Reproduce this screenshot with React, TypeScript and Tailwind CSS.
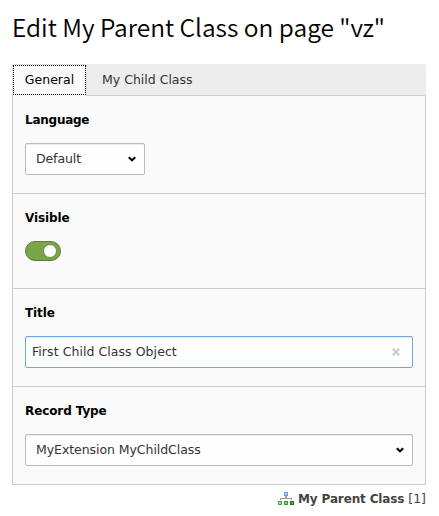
import type { ReactNode } from 'react';

function Chevron() {
  return (
    <svg width="8" height="6" viewBox="0 0 8 6" className="shrink-0" fill="none">
      <path d="M0.8 1.2L4 4.2L7.2 1.2" stroke="#000" strokeWidth="2.1" />
    </svg>
  );
}

function Select({ value, className }: { value: ReactNode; className: string }) {
  return (
    <div className={`flex h-8 items-center justify-between rounded-[2px] border border-[#bbb] bg-[#fefefe] pl-2.5 pr-2 text-[#333] shadow-[inset_0_1px_1px_rgba(0,0,0,0.075)] ${className}`}>
      {value}
      <Chevron />
    </div>
  );
}

function Field({ label, children, className = '' }: { label: ReactNode; children: ReactNode; className?: string }) {
  return (
    <div className={`border-b border-[#ccc] px-3 ${className}`}>
      <div className="flex h-[47px] items-center text-[12px] font-bold text-black">{label}</div>
      {children}
    </div>
  );
}

function TreeIcon() {
  return (
    <svg width="16" height="16" viewBox="0 0 16 16" className="mr-1 shrink-0" shapeRendering="crispEdges">
      <rect x="6" y="1" width="4" height="4" fill="#6f9fe0" />
      <rect x="7" y="2" width="2" height="2" fill="#a9caf5" />
      <path d="M7 5h2v2h5v2h-1v-1h-10v1h-1v-2h5z" fill="#999" />
      <rect x="0" y="10" width="4" height="4" fill="#55a850" />
      <rect x="1" y="11" width="2" height="2" fill="#9ad692" />
      <rect x="6" y="10" width="4" height="4" fill="#3f9a3a" />
      <rect x="7" y="11" width="2" height="2" fill="#8acb83" />
      <rect x="12" y="10" width="4" height="4" fill="#1f7a20" />
      <rect x="13" y="11" width="2" height="2" fill="#55a850" />
    </svg>
  );
}

export default function App() {
  return (
    <div className="h-[516px] w-[439px] overflow-hidden bg-white pl-3 font-['DejaVu_Sans',Verdana,sans-serif] text-[12.5px] leading-4">
      <h1 className="flex h-16 items-center whitespace-nowrap pb-2.5 font-['Noto_Sans_CJK_SC',sans-serif] text-[24.5px] font-[350] leading-8 text-black">
        <span>Edit My Parent Class on page "vz"</span>
      </h1>
      <div className="w-[414px]">
        <div className="flex h-8 rounded-t-[2px] bg-[#ededed]">
          <div className="flex w-[75px] rounded-tl-[2px] border-l border-t border-r border-[#ddd] bg-[#fafafa]">
            <div className="mb-px flex w-full items-center justify-center border border-dotted border-black text-black">
              <span>General</span>
            </div>
          </div>
          <div className="flex flex-1 items-center border-b border-[#ccc] pl-[15px] text-[#333]">
            <span>My Child Class</span>
          </div>
        </div>
        <div className="border-x border-[#ccc] bg-[#fafafa]">
          <Field label={<span className="tracking-[-0.25px]">Language</span>} className="h-[98px]">
            <Select value={<span className="tracking-[-0.1px]">Default</span>} className="w-[120px]" />
          </Field>
          <Field label={<span className="tracking-[-0.1px]">Visible</span>} className="h-[95px]">
            <div className="flex h-5 w-9 items-center justify-end rounded-full border border-[#5c8035] bg-[#79a548] pr-[3px]">
              <div className="size-3.5 rounded-full border border-[#648c3b] bg-white" />
            </div>
          </Field>
          <Field label={<span className="tracking-[-0.1px]">Title</span>} className="h-[98px]">
            <div className="flex h-8 items-center justify-between rounded-[2px] border border-[#6daae0] bg-[#fefefe] pl-1.5 pr-3 text-[#333] shadow-[inset_0_1px_1px_rgba(0,0,0,0.075)]">
              <span className="tracking-[0.06px]">First Child Class Object</span>
              <svg width="8" height="8" viewBox="0 0 8 8">
                <path d="M0.8 0.8L7.2 7.2M7.2 0.8L0.8 7.2" stroke="#ccc" strokeWidth="2.2" />
              </svg>
            </div>
          </Field>
          <Field label={<span className="tracking-[-0.1px]">Record Type</span>} className="h-[98px]">
            <Select value={<span className="tracking-[-0.06px]">MyExtension MyChildClass</span>} className="w-full" />
          </Field>
        </div>
        <div className="flex h-7 items-center justify-end text-[#444]">
          <TreeIcon />
          <b className="text-[12px] tracking-[-0.14px]">My Parent Class</b>
          <span className="ml-1">[1]</span>
        </div>
      </div>
    </div>
  );
}
